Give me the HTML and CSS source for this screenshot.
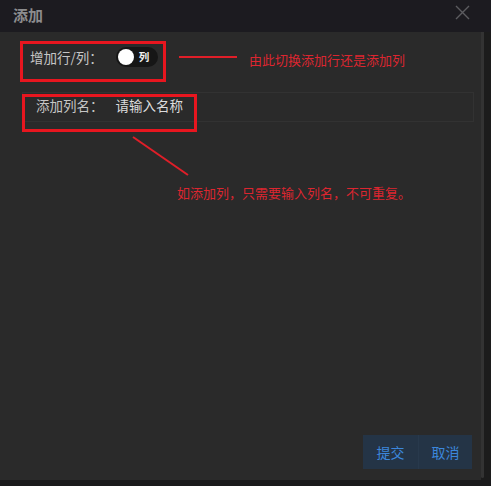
FILE: index.html
```html
<!DOCTYPE html>
<html lang="zh">
<head>
<meta charset="utf-8">
<title>添加</title>
<link rel="stylesheet" href="styles.css">
</head>
<body>
<div class="dialog">
  <header class="dlg-head">
    <span class="dlg-title">添加</span>
    <svg class="dlg-close" width="15" height="15" viewBox="0 0 15 15"><path d="M1 1L14 14M14 1L1 14" stroke="#5c5c60" stroke-width="1.4" fill="none"/></svg>
  </header>
  <div class="dlg-main">
    <div class="dlg-body">
      <div class="row row-toggle">
        <span class="label">增加行/列：</span>
        <span class="switch"><span class="knob"></span><span class="switch-text">列</span></span>
      </div>
      <div class="row row-input">
        <span class="label">添加列名：</span>
        <span class="input">请输入名称</span>
      </div>
      <div class="spacer"></div>
      <div class="footer">
        <div class="btns">
          <button class="btn">提交</button>
          <button class="btn">取消</button>
        </div>
      </div>

      <div class="mark mark-1"></div>
      <div class="mark mark-2"></div>
      <svg class="arrows" width="481" height="200" viewBox="0 0 481 200">
        <line x1="179" y1="25" x2="237" y2="25" stroke="#e01e28" stroke-width="2"/>
        <line x1="133" y1="105" x2="188" y2="143" stroke="#e01e28" stroke-width="2"/>
      </svg>
      <div class="note note-1">由此切换添加行还是添加列</div>
      <div class="note note-2">如添加列，只需要输入列名，不可重复。</div>
    </div>
    <div class="scroll-track"></div>
  </div>
</div>
</body>
</html>
```
FILE: styles.css
```css
html, body {
  margin: 0;
  padding: 0;
  background: #1a1a1c;
  font-family: "Noto Sans CJK SC", "Noto Sans", sans-serif;
}
.dialog {
  width: 491px;
  height: 486px;
  display: flex;
  flex-direction: column;
  overflow: hidden;
}
.dlg-head {
  height: 32px;
  flex: none;
  background: #1c1b20;
  display: flex;
  align-items: center;
  justify-content: space-between;
  padding: 0 21px 0 13px;
  box-sizing: border-box;
}
.dlg-title {
  color: #8c8c8e;
  font-size: 15px;
  font-weight: 700;
  line-height: 1;
  margin-top: -3px;
}
.dlg-close {
  margin-top: -8px;
}
.dlg-main {
  height: 448px;
  flex: none;
  display: flex;
  background: #1c1c1c;
}
.dlg-body {
  position: relative;
  width: 481px;
  height: 448px;
  background: #2a2a2a;
  display: flex;
  flex-direction: column;
  box-sizing: border-box;
}
.scroll-track {
  width: 3px;
  height: 446px;
  background: #333333;
  border-radius: 0 0 2px 2px;
}
.row {
  display: flex;
  align-items: center;
}
.label {
  color: #c6c6c6;
  font-size: 13.5px;
  line-height: 18px;
}
.row-toggle {
  margin-top: 13px;
  height: 24px;
  padding-left: 30px;
}
.switch {
  margin-left: 13px;
  width: 42px;
  height: 20px;
  border-radius: 10px;
  background: #161616;
  display: flex;
  align-items: center;
  box-sizing: border-box;
  padding-left: 2px;
}
.knob {
  width: 16px;
  height: 16px;
  border-radius: 50%;
  background: #ffffff;
}
.switch-text {
  color: #f2f2f2;
  font-size: 10.5px;
  font-weight: 700;
  margin-left: 5px;
  line-height: 1;
}
.row-input {
  margin: 23px 0 0 22px;
  width: 452px;
  height: 30px;
  border: 1px solid #323232;
  box-sizing: border-box;
  padding-left: 13px;
}
.input {
  margin-left: 12px;
  color: #dcdcdc;
  font-size: 13.5px;
  line-height: 18px;
  margin-top: -4px;
}
.row-input .label {
  margin-top: -4px;
}
.spacer {
  flex: 1;
}
.footer {
  display: flex;
  justify-content: flex-end;
  padding: 0 9px 11px 0;
}
.btns {
  display: flex;
  background: #243446;
  height: 34px;
}
.btn {
  background: transparent;
  border: none;
  color: #3c87dc;
  font-family: inherit;
  font-size: 14px;
  padding: 0;
  width: 55px;
  height: 34px;
  line-height: 34px;
  cursor: pointer;
}
.btn + .btn {
  border-left: 1px solid #28394c;
  width: 54px;
}
.mark {
  position: absolute;
  border: 3px solid #e8161f;
  box-sizing: border-box;
}
.mark-1 {
  left: 20px;
  top: 9px;
  width: 146px;
  height: 41px;
}
.mark-2 {
  left: 22px;
  top: 62px;
  width: 175px;
  height: 38px;
}
.arrows {
  position: absolute;
  left: 0;
  top: 0;
}
.note {
  position: absolute;
  color: #dc2630;
  font-size: 13px;
  line-height: 18px;
  white-space: nowrap;
}
.note-1 {
  left: 249px;
  top: 19px;
}
.note-2 {
  left: 177px;
  top: 152px;
}
```
